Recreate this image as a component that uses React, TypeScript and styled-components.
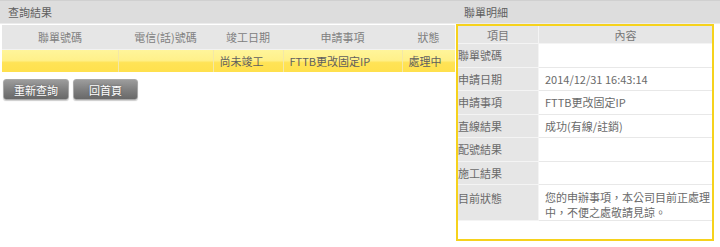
import React from "react";
import styled, { createGlobalStyle } from "styled-components";

const Global = createGlobalStyle`
  html, body { margin: 0; padding: 0; background: #fff; }
  body { font-family: "Noto Sans CJK TC", "Noto Sans", sans-serif; font-size: 11px; color: #666; }
`;

const Page = styled.div`
  width: 720px;
  height: 247px;
  display: flex;
  flex-direction: column;
`;

const TopBar = styled.div`
  display: flex;
  height: 22px;
  border-top: 1px solid #d0d0d0;
  border-bottom: 1px solid #ececec;
  background: #dddddd;
`;

const BarTitle = styled.div<{ $w?: number }>`
  ${(p) => (p.$w ? `width: ${p.$w}px;` : "flex: 1;")}
  box-sizing: border-box;
  padding-left: 8px;
  line-height: 22px;
  color: #5f5f5f;
`;

const Body = styled.div`
  display: flex;
  align-items: flex-start;
`;

const LeftPane = styled.div`
  width: 456px;
  box-sizing: border-box;
  padding: 1px 1px 0 2px;
  display: flex;
  flex-direction: column;
`;

const ResultTable = styled.table`
  width: 453px;
  border-collapse: collapse;
  table-layout: fixed;
`;

const HeadCell = styled.th<{ $w: number }>`
  width: ${(p) => p.$w}px;
  height: 24px;
  padding: 0;
  background: #e6e6e6;
  color: #808080;
  font-weight: normal;
  text-align: center;
  border-bottom: 1px solid #f2f2f2;
`;

const DataRow = styled.tr`
  background: linear-gradient(#fff59a 0%, #fff08a 45%, #ffe356 55%, #ffe04c 100%);
`;

const DataCell = styled.td`
  height: 22px;
  padding: 0 0 0 6px;
  color: #5f5f5f;
  border-left: 1px solid #f3e8a8;
  &:first-child { border-left: none; }
`;

const Buttons = styled.div`
  display: flex;
  gap: 4px;
  margin-top: 7px;
  padding-left: 1px;
`;

const Button = styled.button<{ $w: number }>`
  width: ${(p) => p.$w}px;
  height: 21px;
  padding: 0;
  border: 1px solid #a8a8a8;
  border-radius: 3px;
  background: linear-gradient(#9c9c9c 0%, #808080 50%, #686868 100%);
  color: #fff;
  font-family: inherit;
  font-size: 11px;
  text-shadow: 0 0 2px #555;
  box-shadow: 0 1px 1px rgba(0,0,0,0.2);
`;

const DetailBox = styled.div`
  width: 258px;
  height: 217px;
  box-sizing: border-box;
  border: 2px solid #f6d21c;
`;

const DetailTable = styled.table`
  width: 254px;
  border-collapse: collapse;
  table-layout: fixed;
`;

const DHead = styled.th<{ $w?: number }>`
  ${(p) => (p.$w ? `width: ${p.$w}px;` : "")}
  height: 17px;
  padding: 0;
  background: #e6e6e6;
  color: #777;
  font-weight: normal;
  text-align: center;
  border-bottom: 1px solid #f4f4f4;
  border-left: 1px solid #f4f4f4;
  &:first-child { border-left: none; }
`;

const Label = styled.td<{ $tall?: boolean }>`
  height: ${(p) => (p.$tall ? "29px" : "22.5px")};
  padding: ${(p) => (p.$tall ? "5px 0 0 0" : "0")};
  vertical-align: ${(p) => (p.$tall ? "top" : "middle")};
  background: #e6e6e6;
  color: #6a6a6a;
  border-bottom: 1px solid #f4f4f4;
`;

const Value = styled.td<{ $tall?: boolean }>`
  height: ${(p) => (p.$tall ? "29px" : "22.5px")};
  padding: ${(p) => (p.$tall ? "5px 0 0 6px" : "0 0 0 6px")};
  vertical-align: ${(p) => (p.$tall ? "top" : "middle")};
  color: #6a6a6a;
  line-height: ${(p) => (p.$tall ? "15px" : "normal")};
  border-bottom: 1px solid #e8e8e8;
  border-left: 1px solid #f4f4f4;
`;

const details: [string, string][] = [
  ["聯單號碼", ""],
  ["申請日期", "2014/12/31 16:43:14"],
  ["申請事項", "FTTB更改固定IP"],
  ["直線結果", "成功(有線/註銷)"],
  ["配號結果", ""],
  ["施工結果", ""],
];

export default function App() {
  return (
    <Page>
      <Global />
      <TopBar>
        <BarTitle $w={456}>查詢結果</BarTitle>
        <BarTitle>聯單明細</BarTitle>
      </TopBar>
      <Body>
        <LeftPane>
          <ResultTable>
            <thead>
              <tr>
                <HeadCell $w={116}>聯單號碼</HeadCell>
                <HeadCell $w={95}>電信(話)號碼</HeadCell>
                <HeadCell $w={70}>竣工日期</HeadCell>
                <HeadCell $w={119}>申請事項</HeadCell>
                <HeadCell $w={53}>狀態</HeadCell>
              </tr>
            </thead>
            <tbody>
              <DataRow>
                <DataCell></DataCell>
                <DataCell></DataCell>
                <DataCell>尚未竣工</DataCell>
                <DataCell>FTTB更改固定IP</DataCell>
                <DataCell>處理中</DataCell>
              </DataRow>
            </tbody>
          </ResultTable>
          <Buttons>
            <Button $w={66}>重新查詢</Button>
            <Button $w={65}>回首頁</Button>
          </Buttons>
        </LeftPane>
        <DetailBox>
          <DetailTable>
            <thead>
              <tr>
                <DHead $w={80}>項目</DHead>
                <DHead>內容</DHead>
              </tr>
            </thead>
            <tbody>
              {details.map(([k, v]) => (
                <tr key={k}>
                  <Label>{k}</Label>
                  <Value>{v}</Value>
                </tr>
              ))}
              <tr>
                <Label $tall>目前狀態</Label>
                <Value $tall>您的申辦事項，本公司目前正處理中，不便之處敬請見諒。</Value>
              </tr>
            </tbody>
          </DetailTable>
        </DetailBox>
      </Body>
    </Page>
  );
}
